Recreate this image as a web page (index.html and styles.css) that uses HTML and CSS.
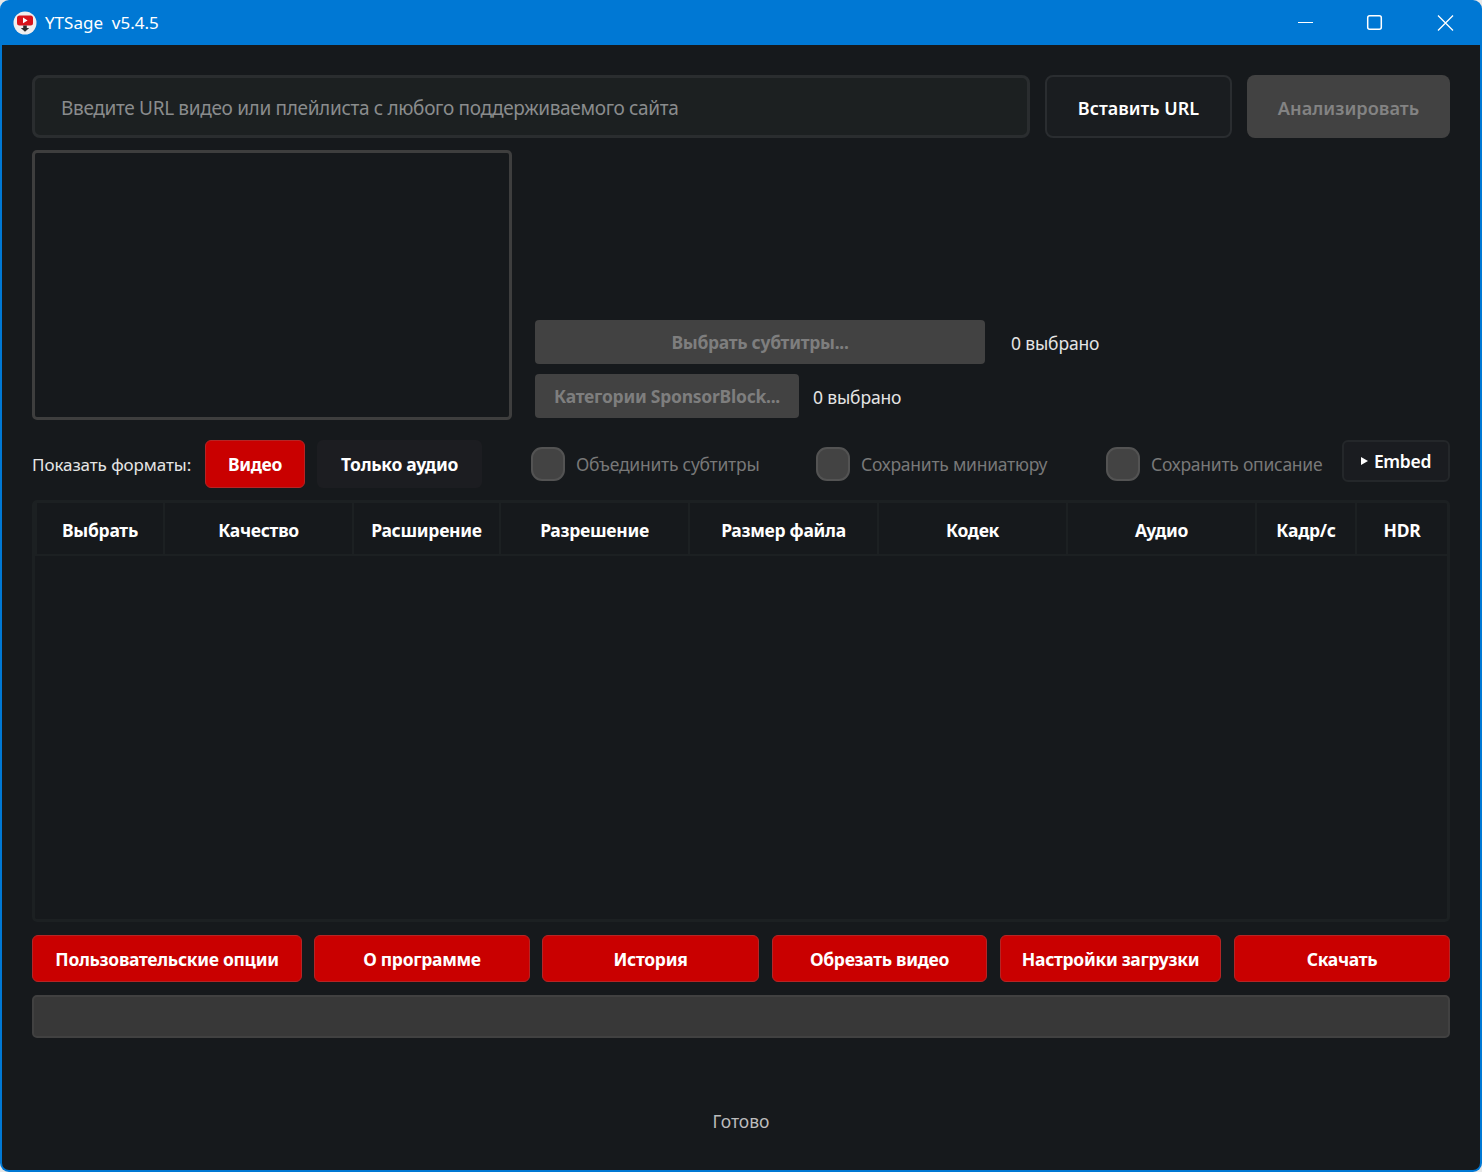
FILE: index.html
```html
<!DOCTYPE html>
<html lang="ru">
<head>
<meta charset="utf-8">
<title>YTSage v5.4.5</title>
<link rel="stylesheet" href="styles.css">
</head>
<body>
<div class="window">
  <header class="titlebar">
    <svg class="app-icon" viewBox="0 0 24 24" width="24" height="24">
      <circle cx="12" cy="12" r="11.5" fill="#f0eeee"/>
      <rect x="4" y="4.5" width="16" height="10" rx="2.5" fill="#d8141c"/>
      <path d="M10 6.6v5.6l4.6-2.8z" fill="#fff"/>
      <path d="M10.2 14.5h3.6v2.5h2.4L12 20.8 7.8 17h2.4z" fill="#2c2c2c"/>
    </svg>
    <span class="app-title">YTSage&nbsp; v5.4.5</span>
    <div class="win-controls">
      <svg class="win-btn" viewBox="0 0 70 45" width="70" height="45"><path d="M28 22.5h15" stroke="#fff" stroke-width="1" fill="none"/></svg>
      <svg class="win-btn" viewBox="0 0 70 45" width="70" height="45"><rect x="27.7" y="15.7" width="13.6" height="13.6" rx="2" stroke="#fff" stroke-width="1.5" fill="none"/></svg>
      <svg class="win-btn" viewBox="0 0 70 45" width="70" height="45"><path d="M28 15.5l15 15M43 15.5l-15 15" stroke="#fff" stroke-width="1.3" fill="none"/></svg>
    </div>
  </header>
  <main class="content">
    <section class="url-row">
      <div class="url-input">Введите URL видео или плейлиста с любого поддерживаемого сайта</div>
      <button class="btn btn-paste">Вставить URL</button>
      <button class="btn btn-analyze">Анализировать</button>
    </section>
    <section class="media-row">
      <div class="thumbnail"></div>
      <div class="media-side">
        <div class="side-line">
          <button class="btn btn-disabled btn-subs">Выбрать субтитры...</button>
          <span class="count count-subs">0 выбрано</span>
        </div>
        <div class="side-line">
          <button class="btn btn-disabled btn-sponsor">Категории SponsorBlock...</button>
          <span class="count count-sponsor">0 выбрано</span>
        </div>
      </div>
    </section>
    <section class="format-row">
      <span class="format-label">Показать форматы:</span>
      <button class="btn btn-red btn-video">Видео</button>
      <button class="btn btn-audio">Только аудио</button>
      <label class="check check-merge"><span class="box"></span><span class="check-text">Объединить субтитры</span></label>
      <label class="check check-thumb"><span class="box"></span><span class="check-text">Сохранить миниатюру</span></label>
      <label class="check check-desc"><span class="box"></span><span class="check-text">Сохранить описание</span></label>
      <button class="btn btn-embed"><span class="tri"></span>Embed</button>
    </section>
    <section class="table">
      <div class="thead">
        <div class="th th-select">Выбрать</div>
        <div class="th th-wide">Качество</div>
        <div class="th th-ext">Расширение</div>
        <div class="th th-wide">Разрешение</div>
        <div class="th th-wide">Размер файла</div>
        <div class="th th-wide">Кодек</div>
        <div class="th th-wide">Аудио</div>
        <div class="th th-fps">Кадр/с</div>
        <div class="th th-hdr">HDR</div>
      </div>
    </section>
    <section class="actions">
      <button class="btn btn-red a1">Пользовательские опции</button>
      <button class="btn btn-red a2">О программе</button>
      <button class="btn btn-red a3">История</button>
      <button class="btn btn-red a4">Обрезать видео</button>
      <button class="btn btn-red a5">Настройки загрузки</button>
      <button class="btn btn-red a6">Скачать</button>
    </section>
    <div class="progress"></div>
    <div class="status">Готово</div>
  </main>
</div>
</body>
</html>
```
FILE: styles.css
```css
* { box-sizing: border-box; }
html, body { margin: 0; padding: 0; height: 100%; background: #e8e8e8; }
body { font-family: "Noto Sans", "Open Sans", sans-serif; color: #fff; overflow: hidden; }
.window { width: 1482px; height: 1172px; display: flex; flex-direction: column; background: #0078d4; border-radius: 9px; overflow: hidden; padding: 0 2px 2px; }
.titlebar { height: 45px; flex: none; display: flex; align-items: center; margin: 0 -2px; padding-left: 13px; }
.app-icon { flex: none; }
.app-title { margin-left: 8px; font-size: 17px; color: #fff; }
.win-controls { margin-left: auto; display: flex; margin-right: 2px; }
.win-btn { display: block; }
.content { flex: 1; background: #16191c; border-radius: 0 0 7px 7px; padding: 30px 30px 0; display: flex; flex-direction: column; }
.btn { font-family: inherit; font-weight: 700; font-size: 17.5px; letter-spacing: -0.3px; color: #fff; border: 2px solid transparent; border-radius: 6px; padding: 0; background: none; white-space: nowrap; }
.url-row { display: flex; height: 63px; flex: none; }
.url-input { width: 998px; background: #1c2021; border: 3px solid #2a2d2f; border-radius: 8px; padding: 2px 0 0 26px; display: flex; align-items: center; font-size: 19px; letter-spacing: -0.33px; color: #8a8c8d; }
.btn-paste { width: 187px; margin-left: 15px; padding-top: 2px; background: #1a1d20; border: 2px solid #2a2d30; border-radius: 8px; font-weight: 600; font-size: 18px; letter-spacing: 0; }
.btn-analyze { width: 203px; margin-left: 15px; padding-top: 2px; background: #424242; color: #838383; border-radius: 8px; font-weight: 600; font-size: 18.2px; letter-spacing: 0; }
.media-row { display: flex; flex: none; margin-top: 12px; height: 270px; }
.thumbnail { width: 480px; height: 270px; border: 3px solid #3e3e3e; border-radius: 5px; background: #16191c; }
.media-side { margin-left: 23px; flex: 1; display: flex; flex-direction: column; justify-content: flex-end; gap: 10px; padding-bottom: 2px; }
.side-line { display: flex; align-items: center; height: 44px; }
.btn-disabled { height: 44px; background: #424242; color: #7e7e7e; border-radius: 4px; }
.btn-subs { width: 450px; }
.btn-sponsor { width: 264px; letter-spacing: -0.25px; }
.count { margin-top: 2px; font-size: 17.5px; letter-spacing: -0.15px; color: #e4e4e4; }
.count-subs { margin-left: 26px; }
.count-sponsor { margin-left: 14px; }
.format-row { display: flex; align-items: flex-start; height: 48px; flex: none; margin-top: 20px; }
.format-label { width: 173px; height: 48px; line-height: 50px; font-size: 17px; letter-spacing: -0.08px; color: #e6e6e6; white-space: nowrap; }
.btn-video { width: 100px; height: 48px; }
.btn-audio { width: 165px; height: 48px; margin-left: 12px; background: #1c1d21; }
.check { display: flex; align-items: center; height: 48px; color: #787878; font-size: 17.5px; letter-spacing: -0.25px; white-space: nowrap; }
.box { width: 34px; height: 34px; flex: none; background: #434343; border: 2px solid #535353; border-radius: 11px; }
.check-text { margin-left: 11px; }
.check-merge { margin-left: 49px; width: 285px; }
.check-thumb { width: 290px; }
.check-desc { width: 236px; }
.btn-embed { width: 108px; height: 42px; background: #1a1c20; border: 2px solid #24272a; display: flex; align-items: center; justify-content: center; font-weight: 600; }
.tri { width: 0; height: 0; border-left: 7px solid #fff; border-top: 4px solid transparent; border-bottom: 4px solid transparent; margin-right: 6px; }
.table { flex: none; height: 422px; margin-top: 12px; border: 3px solid #1c2022; border-radius: 5px; background: #16191c; }
.thead { display: flex; height: 53px; border-bottom: 2px solid #1c2022; }
.th { flex: none; display: flex; align-items: center; justify-content: center; padding-top: 2px; font-weight: 700; font-size: 17.5px; letter-spacing: -0.3px; color: #fff; border-right: 2px solid #1c2022; }
.th-select { width: 130px; border-left: 2px solid #1c2022; }
.th-wide { width: 189px; }
.th-ext { width: 147px; }
.th-fps { width: 100px; }
.th-hdr { width: 90px; border-right: 0; }
.actions { display: flex; flex: none; height: 47px; margin-top: 13px; }
.btn-red { background: #c90000; border: 1px solid #b52525; }
.actions .btn { height: 47px; }
.a1 { width: 270px; margin-right: 12px; }
.a2 { width: 216px; margin-right: 12px; }
.a3 { width: 217px; margin-right: 13px; }
.a4 { width: 215px; margin-right: 13px; }
.a5 { width: 221px; margin-right: 13px; }
.a6 { width: 216px; }
.progress { flex: none; height: 43px; margin-top: 13px; background: #383838; border: 2px solid #414141; border-radius: 5px; }
.status { flex: none; margin-top: 71px; text-align: center; font-size: 17.5px; color: #bcbcbc; line-height: 24px; }
```
